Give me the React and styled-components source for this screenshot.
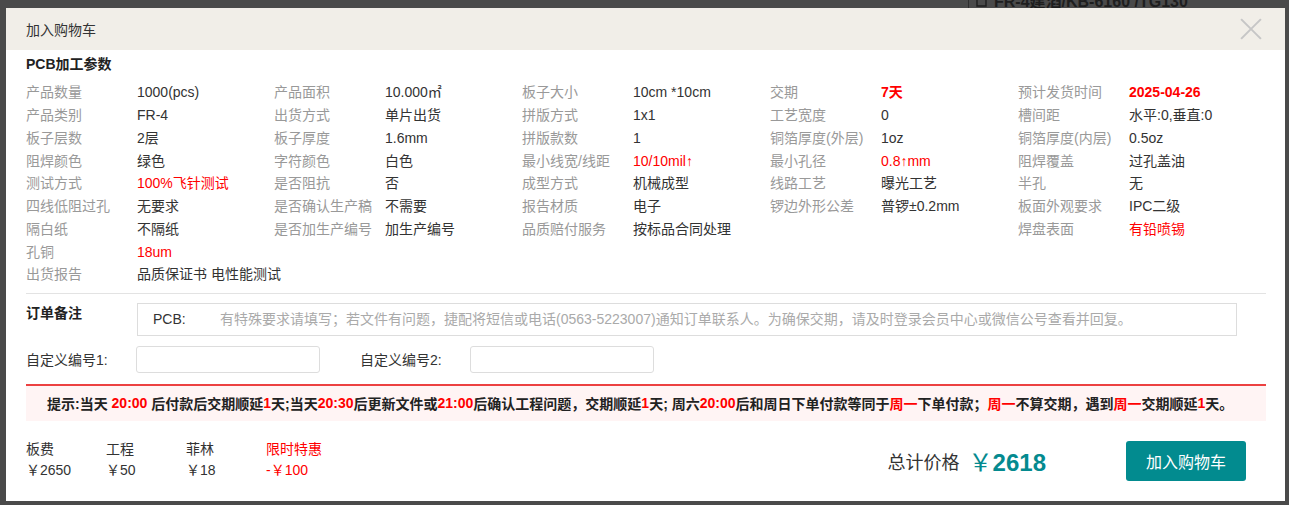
import React from "react";
import styled, { createGlobalStyle } from "styled-components";

const GlobalStyle = createGlobalStyle`
  html, body {
    margin: 0;
    padding: 0;
    background: #4a4a4a;
    height: 505px;
    overflow: hidden;
  }
  body {
    font-family: "Liberation Sans", "Noto Sans CJK SC", sans-serif;
    font-size: 14px;
    color: #333;
  }
  * { box-sizing: border-box; }
`;

const Page = styled.div`
  position: relative;
  padding: 8px 0 0 6px;
`;

const BehindText = styled.div`
  position: absolute;
  top: -9px;
  left: 968px;
  height: 17px;
  padding-left: 6px;
  border-left: 1px solid #2e2e2e;
  display: flex;
  align-items: center;
  gap: 6px;
  font-weight: bold;
  font-size: 16px;
  color: #1e1e1e;
  white-space: nowrap;
`;

const Modal = styled.div`
  position: relative;
  width: 1279px;
  height: 493px;
  background: #fff;
  display: flex;
  flex-direction: column;
`;

const Header = styled.div`
  height: 42px;
  background: #f1eee8;
  display: flex;
  align-items: center;
  justify-content: space-between;
  padding: 0 23px 0 20px;
  font-size: 14px;
  color: #333;
`;

const Close = styled.div`
  position: relative;
  width: 22px;
  height: 22px;
  &::before, &::after {
    content: "";
    position: absolute;
    left: -3px;
    top: 10px;
    width: 28px;
    height: 2px;
    background: #c6c6c6;
    transform: rotate(45deg);
  }
  &::after { transform: rotate(-45deg); }
`;

const Body = styled.div`
  flex: 1;
  padding: 4px 19px 0 20px;
  display: flex;
  flex-direction: column;
`;

const SectionTitle = styled.div`
  font-weight: bold;
  font-size: 14px;
  line-height: 20px;
  color: #222;
  margin-bottom: 7px;
`;

const ParamGrid = styled.div`
  display: grid;
  grid-template-columns: repeat(5, 111px 137px);
  grid-auto-rows: 22.75px;
  align-items: center;
  padding-bottom: 7px;
  border-bottom: 1px solid #e3e3e3;
`;

const Label = styled.div`
  color: #999;
  white-space: nowrap;
  line-height: 22px;
`;

const Value = styled.div`
  color: ${(p) => (p.$red ? "#f00" : "#333")};
  font-weight: ${(p) => (p.$bold ? "bold" : "normal")};
  white-space: nowrap;
  line-height: 22px;
`;

const RemarkRow = styled.div`
  display: flex;
  margin-top: 9px;
`;

const RemarkLabel = styled.div`
  width: 111px;
  font-weight: bold;
  color: #222;
  line-height: 20px;
`;

const RemarkBox = styled.div`
  width: 1100px;
  height: 33px;
  border: 1px solid #ddd;
  display: flex;
  align-items: center;
  padding-left: 15px;
`;

const RemarkPrefix = styled.span`
  width: 67px;
  color: #333;
`;

const RemarkInput = styled.input`
  flex: 1;
  border: none;
  outline: none;
  font: inherit;
  padding: 0;
  color: #333;
  &::placeholder { color: #aaa; }
`;

const CustomRow = styled.div`
  display: flex;
  align-items: center;
  margin-top: 10px;
`;

const CustomLabel = styled.div`
  width: 110px;
  margin-left: ${(p) => p.$offset || 0}px;
  color: #333;
`;

const CustomInput = styled.input`
  width: 184px;
  height: 27px;
  border: 1px solid #ddd;
  border-radius: 3px;
  outline: none;
`;

const Notice = styled.div`
  margin-top: 11px;
  height: 37px;
  border-top: 2px solid #ec4141;
  background: #fff4f4;
  display: flex;
  align-items: center;
  padding-left: 21px;
  font-weight: bold;
  font-size: 14px;
  color: #222;
  white-space: nowrap;
`;

const Red = styled.span`
  color: #f00;
`;

const Footer = styled.div`
  flex: 1;
  display: flex;
  align-items: center;
  justify-content: space-between;
  padding: 0 20px 0 0;
`;

const Fees = styled.div`
  display: grid;
  grid-template-columns: repeat(4, 80px);
  line-height: 21px;
  margin-top: -2px;
`;

const Fee = styled.div`
  color: ${(p) => (p.$red ? "#f00" : "#333")};
  white-space: nowrap;
`;

const TotalArea = styled.div`
  display: flex;
  align-items: center;
`;

const TotalLabel = styled.span`
  font-size: 18px;
  color: #333;
  margin-right: 9px;
`;

const TotalPrice = styled.span`
  color: #048a8f;
  font-size: 24px;
  margin-right: 80px;
  b { font-weight: bold; }
`;

const CartButton = styled.button`
  width: 120px;
  height: 40px;
  border: none;
  border-radius: 3px;
  background: #028b8f;
  color: #fff;
  font-family: inherit;
  font-size: 16px;
  cursor: pointer;
`;

const params = [
  [["产品数量", "1000(pcs)"], ["产品面积", "10.000㎡"], ["板子大小", "10cm *10cm"], ["交期", "7天", "rb"], ["预计发货时间", "2025-04-26", "rb"]],
  [["产品类别", "FR-4"], ["出货方式", "单片出货"], ["拼版方式", "1x1"], ["工艺宽度", "0"], ["槽间距", "水平:0,垂直:0"]],
  [["板子层数", "2层"], ["板子厚度", "1.6mm"], ["拼版款数", "1"], ["铜箔厚度(外层)", "1oz"], ["铜箔厚度(内层)", "0.5oz"]],
  [["阻焊颜色", "绿色"], ["字符颜色", "白色"], ["最小线宽/线距", "10/10mil↑", "r"], ["最小孔径", "0.8↑mm", "r"], ["阻焊覆盖", "过孔盖油"]],
  [["测试方式", "100%飞针测试", "r"], ["是否阻抗", "否"], ["成型方式", "机械成型"], ["线路工艺", "曝光工艺"], ["半孔", "无"]],
  [["四线低阻过孔", "无要求"], ["是否确认生产稿", "不需要"], ["报告材质", "电子"], ["锣边外形公差", "普锣±0.2mm"], ["板面外观要求", "IPC二级"]],
  [["隔白纸", "不隔纸"], ["是否加生产编号", "加生产编号"], ["品质赔付服务", "按标品合同处理"], null, ["焊盘表面", "有铅喷锡", "r"]],
  [["孔铜", "18um", "r"], null, null, null, null],
  [["出货报告", "品质保证书 电性能测试"], null, null, null, null],
];

const fees = [
  ["板费", "￥2650"],
  ["工程", "￥50"],
  ["菲林", "￥18"],
  ["限时特惠", "-￥100", true],
];

export default function App() {
  return (
    <Page>
      <GlobalStyle />
      <BehindText>
        <svg width="13" height="15" viewBox="0 0 13 15" fill="none" stroke="#1e1e1e" strokeWidth="1.4">
          <path d="M2 1h6l3 3v10H2z" />
        </svg>
        FR-4建滔/KB-6160 /TG130
      </BehindText>
      <Modal>
        <Header>
          <span>加入购物车</span>
          <Close />
        </Header>
        <Body>
          <SectionTitle>PCB加工参数</SectionTitle>
          <ParamGrid>
            {params.map((row, i) =>
              row.map((cell, j) =>
                cell ? (
                  <React.Fragment key={`${i}-${j}`}>
                    <Label>{cell[0]}</Label>
                    <Value $red={!!cell[2]} $bold={cell[2] === "rb"}>
                      {cell[1]}
                    </Value>
                  </React.Fragment>
                ) : (
                  <React.Fragment key={`${i}-${j}`}>
                    <Label />
                    <Value />
                  </React.Fragment>
                )
              )
            )}
          </ParamGrid>

          <RemarkRow>
            <RemarkLabel>订单备注</RemarkLabel>
            <RemarkBox>
              <RemarkPrefix>PCB:</RemarkPrefix>
              <RemarkInput placeholder="有特殊要求请填写；若文件有问题，捷配将短信或电话(0563-5223007)通知订单联系人。为确保交期，请及时登录会员中心或微信公号查看并回复。" />
            </RemarkBox>
          </RemarkRow>

          <CustomRow>
            <CustomLabel>自定义编号1:</CustomLabel>
            <CustomInput />
            <CustomLabel $offset={40}>自定义编号2:</CustomLabel>
            <CustomInput />
          </CustomRow>

          <Notice>
            提示:当天&nbsp;<Red>20:00</Red>&nbsp;后付款后交期顺延<Red>1</Red>天;当天<Red>20:30</Red>后更新文件或<Red>21:00</Red>后确认工程问题，交期顺延<Red>1</Red>天;&nbsp;周六<Red>20:00</Red>后和周日下单付款等同于<Red>周一</Red>下单付款；<Red>周一</Red>不算交期，遇到<Red>周一</Red>交期顺延<Red>1</Red>天。
          </Notice>

          <Footer>
            <Fees>
              {fees.map((f) => (
                <Fee key={f[0]} $red={f[2]}>{f[0]}</Fee>
              ))}
              {fees.map((f) => (
                <Fee key={f[1]} $red={f[2]}>{f[1]}</Fee>
              ))}
            </Fees>
            <TotalArea>
              <TotalLabel>总计价格</TotalLabel>
              <TotalPrice>￥<b>2618</b></TotalPrice>
              <CartButton>加入购物车</CartButton>
            </TotalArea>
          </Footer>
        </Body>
      </Modal>
    </Page>
  );
}
